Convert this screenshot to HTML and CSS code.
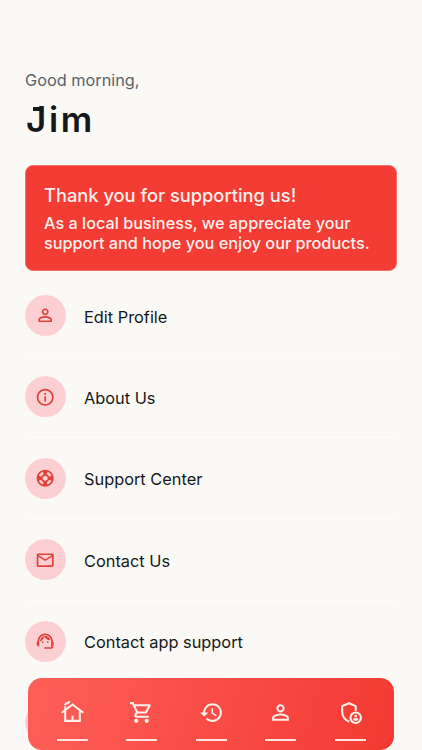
FILE: index.html
```html
<!DOCTYPE html>
<html lang="en">

<head>
    <meta charset="utf-8">
    <title>Profile</title>
    <link rel="stylesheet" href="styles.css">
</head>

<body>
    <div class="page">
        <header class="header">
            <p class="greeting">Good morning,</p>
            <h1 class="name">Jim</h1>
        </header>

        <div class="card">
            <h2 class="card-title">Thank you for supporting us!</h2>
            <p class="card-text">As a local business, we appreciate your<br>support and hope you enjoy our products.</p>
        </div>

        <ul class="menu">
            <li class="menu-item">
                <span class="menu-icon">
                    <svg viewBox="0 0 24 24"><path d="M12 5.9c1.16 0 2.1.94 2.1 2.1s-.94 2.1-2.1 2.1S9.9 9.16 9.9 8s.94-2.1 2.1-2.1m0 9c2.97 0 6.1 1.46 6.1 2.1v1.1H5.9V17c0-.64 3.13-2.1 6.1-2.1M12 4C9.79 4 8 5.79 8 8s1.79 4 4 4 4-1.79 4-4-1.79-4-4-4zm0 9c-2.67 0-8 1.34-8 4v3h16v-3c0-2.66-5.33-4-8-4z"/></svg>
                </span>
                <span class="menu-label">Edit Profile</span>
            </li>
            <li class="menu-item">
                <span class="menu-icon">
                    <svg viewBox="0 0 24 24"><path d="M11 7h2v2h-2zm0 4h2v6h-2zm1-9C6.48 2 2 6.48 2 12s4.48 10 10 10 10-4.48 10-10S17.52 2 12 2zm0 18c-4.41 0-8-3.59-8-8s3.59-8 8-8 8 3.59 8 8-3.59 8-8 8z"/></svg>
                </span>
                <span class="menu-label">About Us</span>
            </li>
            <li class="menu-item">
                <span class="menu-icon">
                    <svg viewBox="0 0 24 24"><path d="M12 2C6.48 2 2 6.48 2 12s4.48 10 10 10 10-4.48 10-10S17.52 2 12 2zm7.46 7.12l-2.78 1.15c-.51-1.36-1.58-2.44-2.95-2.94l1.15-2.78c2.1.8 3.77 2.47 4.58 4.57zM12 15c-1.66 0-3-1.34-3-3s1.34-3 3-3 3 1.34 3 3-1.34 3-3 3zM9.13 4.54l1.17 2.78c-1.38.5-2.47 1.59-2.98 2.97L4.54 9.13c.81-2.11 2.48-3.78 4.59-4.59zM4.54 14.87l2.78-1.15c.51 1.38 1.59 2.46 2.97 2.96l-1.17 2.78c-2.1-.81-3.77-2.48-4.58-4.59zm10.34 4.59l-1.15-2.78c1.37-.51 2.45-1.59 2.95-2.97l2.78 1.17c-.81 2.1-2.48 3.77-4.58 4.58z"/></svg>
                </span>
                <span class="menu-label">Support Center</span>
            </li>
            <li class="menu-item">
                <span class="menu-icon">
                    <svg viewBox="0 0 24 24"><path d="M22 6c0-1.1-.9-2-2-2H4c-1.1 0-2 .9-2 2v12c0 1.1.9 2 2 2h16c1.1 0 2-.9 2-2V6zm-2 0l-8 5-8-5h16zm0 12H4V8l8 5 8-5v10z"/></svg>
                </span>
                <span class="menu-label">Contact Us</span>
            </li>
            <li class="menu-item">
                <span class="menu-icon">
                    <svg viewBox="0 0 24 24"><path d="M21 12.22C21 6.73 16.74 3 12 3c-4.69 0-9 3.65-9 9.28-.6.34-1 .98-1 1.72v2c0 1.1.9 2 2 2h1v-6.1c0-3.87 3.13-7 7-7s7 3.13 7 7V19h-8v2h8c1.1 0 2-.9 2-2v-1.22c.59-.31 1-.92 1-1.64v-2.3c0-.7-.41-1.31-1-1.62z"/><circle cx="9" cy="13" r="1"/><circle cx="15" cy="13" r="1"/><path d="M18 11.03C17.52 8.18 15.04 6 12.05 6c-3.03 0-6.29 2.51-6.03 6.45 2.47-1.01 4.33-3.21 4.86-5.89 1.31 2.63 4 4.44 7.12 4.47z"/></svg>
                </span>
                <span class="menu-label">Contact app support</span>
            </li>
            <li class="menu-item">
                <span class="menu-icon"></span>
            </li>
        </ul>
    </div>

    <nav class="navbar">
        <a class="nav-link">
            <svg viewBox="0 0 24 24"><path d="M12 3L6 7.58V6H4v3.11L1 11.4l1.21 1.59L4 11.62V21h16v-9.38l1.79 1.36L23 11.4 12 3zM18 19h-5v-4h-2v4H6v-8.9l6-4.58 6 4.58V19zM10 1c0 1.66-1.34 3-3 3-.55 0-1 .45-1 1H4c0-1.66 1.34-3 3-3 .55 0 1-.45 1-1h2z"/></svg>
        </a>
        <a class="nav-link">
            <svg viewBox="0 0 24 24"><path d="M15.55 13c.75 0 1.41-.41 1.75-1.03l3.58-6.49c.37-.66-.11-1.48-.87-1.48H5.21l-.94-2H1v2h2l3.6 7.59-1.35 2.44C4.52 15.37 5.48 17 7 17h12v-2H7l1.1-2h7.45zM6.16 6h12.15l-2.76 5H8.53L6.16 6zM7 18c-1.1 0-1.99.9-1.99 2S5.9 22 7 22s2-.9 2-2-.9-2-2-2zm10 0c-1.1 0-1.99.9-1.99 2s.89 2 1.99 2 2-.9 2-2-.9-2-2-2z"/></svg>
        </a>
        <a class="nav-link">
            <svg viewBox="0 0 24 24"><path d="M13 3c-4.97 0-9 4.03-9 9H1l3.89 3.89.07.14L9 12H6c0-3.87 3.13-7 7-7s7 3.13 7 7-3.13 7-7 7c-1.93 0-3.68-.79-4.94-2.06l-1.42 1.42C8.27 19.99 10.51 21 13 21c4.97 0 9-4.03 9-9s-4.03-9-9-9zm-1 5v5l4.28 2.54.72-1.21-3.5-2.08V8H12z"/></svg>
        </a>
        <a class="nav-link">
            <svg viewBox="0 0 24 24"><path d="M12 5.9c1.16 0 2.1.94 2.1 2.1s-.94 2.1-2.1 2.1S9.9 9.16 9.9 8s.94-2.1 2.1-2.1m0 9c2.97 0 6.1 1.46 6.1 2.1v1.1H5.9V17c0-.64 3.13-2.1 6.1-2.1M12 4C9.79 4 8 5.79 8 8s1.79 4 4 4 4-1.79 4-4-1.79-4-4-4zm0 9c-2.67 0-8 1.34-8 4v3h16v-3c0-2.66-5.33-4-8-4z"/></svg>
        </a>
        <a class="nav-link">
            <svg viewBox="0 0 24 24"><path class="line" d="M17 10.2V5.9L10.5 3.1 4 5.9v5.2c0 4.4 2.8 8.3 6.9 9.7"/><circle class="line" cx="17" cy="17" r="5"/><circle cx="17" cy="15.4" r="1.3"/><path d="M14.3 18.7c.3-1 1.7-1.4 2.7-1.4s2.4.4 2.7 1.4c-.6.8-1.6 1.3-2.7 1.3s-2.1-.5-2.7-1.3z"/></svg>
        </a>
    </nav>
</body>

</html>
```
FILE: styles.css
```css
* {
    box-sizing: border-box;
}

body {
    margin: 0;
    height: 750px;
    overflow: hidden;
    background: #fbf9f5;
    font-family: Inter, "Open Sans", sans-serif;
    color: #14181b;
}

h1,
h2,
p,
ul {
    margin: 0;
    padding: 0;
}

svg {
    display: block;
    fill: currentColor;
}

.page {
    padding: 69px 25px 0;
}

.header {
    height: 96.4px;
}

.greeting {
    font-size: 16.3px;
    line-height: 22px;
    color: #57636c;
}

.name {
    position: relative;
    width: max-content;
    padding-left: 1px;
    font-size: 35px;
    font-weight: 600;
    line-height: 44px;
    margin-top: 6px;
    letter-spacing: 2.6px;
}

/* top bar of the J */
.name::before {
    content: "";
    position: absolute;
    left: 8px;
    top: 10px;
    width: 10px;
    height: 4px;
    background: #14181b;
}

.card {
    height: 106px;
    padding: 17px 18px;
    border: 1px solid #f4706a;
    border-radius: 8px;
    background: #f33c34;
    color: #fdf0ed;
}

.card-title {
    font-size: 18.3px;
    font-weight: 500;
    line-height: 24px;
    white-space: nowrap;
}

.card-text {
    margin-top: 7px;
    font-size: 16.25px;
    font-weight: 500;
    line-height: 19.5px;
    white-space: nowrap;
}

.menu {
    margin-top: 4px;
    list-style: none;
}

.menu-item {
    display: flex;
    align-items: center;
    height: 81.4px;
    border-bottom: 1px solid #fefdfa;
}

.menu-icon {
    display: flex;
    align-items: center;
    justify-content: center;
    width: 41px;
    height: 41px;
    border-radius: 50%;
    background: #fccfd2;
    color: #e0413a;
}

.menu-icon svg {
    width: 20.4px;
    height: 20.4px;
}

.menu-label {
    margin-left: 18px;
    padding-top: 2px;
    font-size: 16.35px;
    line-height: 22px;
}

.navbar {
    position: fixed;
    left: 28px;
    top: 678.4px;
    display: flex;
    justify-content: space-between;
    width: 366px;
    height: 71.4px;
    padding: 0 28.5px;
    border-radius: 14px;
    background: linear-gradient(105deg, #ff5f59, #f23a32);
    color: #fff0ee;
}

.nav-link {
    display: flex;
    flex-direction: column;
    justify-content: space-between;
    align-items: center;
    width: 31px;
    padding-top: 22px;
    margin-bottom: 9px;
    border-bottom: 2px solid #ffe3e0;
}

.nav-link svg {
    width: 25px;
    height: 25px;
}

.line {
    fill: none;
    stroke: currentColor;
    stroke-width: 2;
}
```
